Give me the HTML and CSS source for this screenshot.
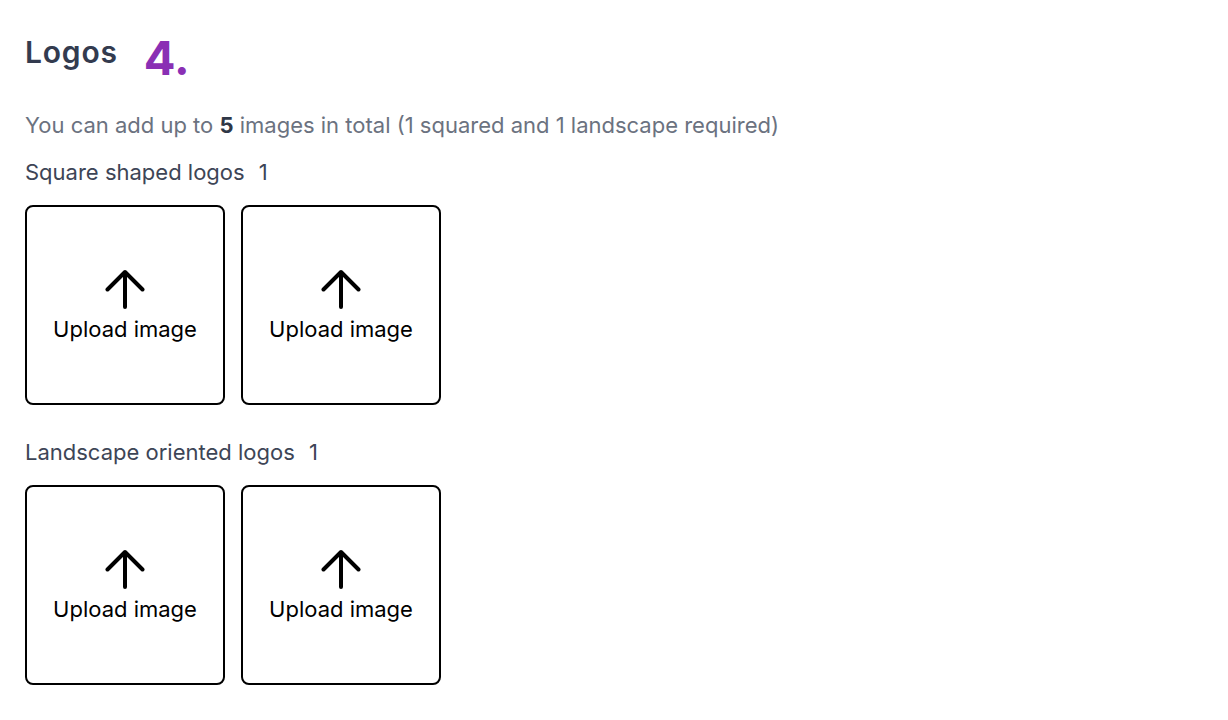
FILE: index.html
```html
<!DOCTYPE html>
<html lang="en">
<head>
  <meta charset="UTF-8" />
  <meta name="viewport" content="width=device-width, initial-scale=1.0"/>
  <title>Logos</title>
  <link rel="stylesheet" href="styles.css">
</head>
<body>
  <div class="logos-section">
    <div class="section-title">
      <h2>Logos</h2>
      <span class="step-number">4.</span>
    </div>

    <p class="hint">You can add up to <strong>5</strong> images in total (1 squared and 1 landscape required)</p>

    <div class="logo-group">
      <div class="group-label">Square shaped logos <span class="count">1</span></div>
      <div class="upload-row">
        <button type="button" class="upload-box">
          <svg class="upload-icon" viewBox="0 0 40 40" fill="none" stroke="currentColor" stroke-width="4" stroke-linecap="round" stroke-linejoin="round">
            <path d="M20 38V3M2.5 20.5L20 3L37.5 20.5"/>
          </svg>
          <span>Upload image</span>
        </button>
        <button type="button" class="upload-box">
          <svg class="upload-icon" viewBox="0 0 40 40" fill="none" stroke="currentColor" stroke-width="4" stroke-linecap="round" stroke-linejoin="round">
            <path d="M20 38V3M2.5 20.5L20 3L37.5 20.5"/>
          </svg>
          <span>Upload image</span>
        </button>
      </div>
    </div>

    <div class="logo-group">
      <div class="group-label">Landscape oriented logos <span class="count">1</span></div>
      <div class="upload-row">
        <button type="button" class="upload-box">
          <svg class="upload-icon" viewBox="0 0 40 40" fill="none" stroke="currentColor" stroke-width="4" stroke-linecap="round" stroke-linejoin="round">
            <path d="M20 38V3M2.5 20.5L20 3L37.5 20.5"/>
          </svg>
          <span>Upload image</span>
        </button>
        <button type="button" class="upload-box">
          <svg class="upload-icon" viewBox="0 0 40 40" fill="none" stroke="currentColor" stroke-width="4" stroke-linecap="round" stroke-linejoin="round">
            <path d="M20 38V3M2.5 20.5L20 3L37.5 20.5"/>
          </svg>
          <span>Upload image</span>
        </button>
      </div>
    </div>
  </div>
</body>
</html>
```

FILE: styles.css
```css
body {
  font-family: 'Inter', sans-serif;
  background-color: #ffffff;
  color: #000;
  margin: 0;
}

.logos-section {
  padding: 30px 25px;
}

.section-title {
  display: flex;
  align-items: flex-start;
  gap: 26px;
  height: 60px;
}

h2 {
  font-size: 30px;
  font-weight: 600;
  color: #333b4f;
  margin: 0;
  line-height: 44px;
  letter-spacing: 0.8px;
}

.step-number {
  font-size: 47px;
  font-weight: 700;
  color: #8a2fb4;
  line-height: 56px;
}

.hint {
  font-size: 22px;
  color: #6b7280;
  margin: 20px 0 0;
  line-height: 30px;
}

.hint strong {
  color: #2f3747;
  font-weight: 700;
}

.logo-group {
  margin-top: 17px;
}

.logo-group + .logo-group {
  margin-top: 32px;
}

.group-label {
  font-size: 22px;
  color: #3d4556;
  line-height: 30px;
}

.count {
  margin-left: 8px;
}

.upload-row {
  display: flex;
  gap: 16px;
  margin-top: 18px;
}

.upload-box {
  width: 200px;
  height: 200px;
  border: 2px solid #000;
  border-radius: 8px;
  background: #fff;
  display: flex;
  flex-direction: column;
  align-items: center;
  justify-content: center;
  gap: 7px;
  font-family: 'Inter', sans-serif;
  font-size: 22px;
  line-height: 26px;
  color: #000;
  cursor: pointer;
  padding: 0;
}

.upload-icon {
  width: 40px;
  height: 40px;
}
```
